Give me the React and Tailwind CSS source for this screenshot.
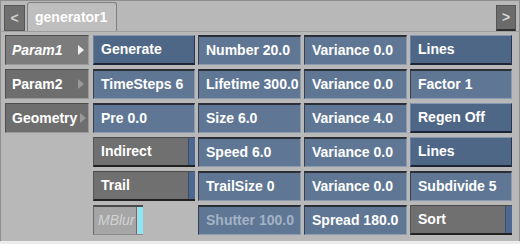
const font = { fontFamily: '"Liberation Sans", Arial, sans-serif' };

function Field({ label, dim }) {
  return (
    <div
      className={`h-[30px] flex items-center pl-[7px] bg-[#5f7794] border-t-2 border-l border-t-[#2c2f36] border-l-[#3a3f48] border-r border-b border-r-[#8d9bb0] border-b-[#8d9bb0] text-[14px] font-bold whitespace-nowrap overflow-hidden ${
        dim ? "text-[#a3b2c4]" : "text-white"
      }`}
    >
      {label}
    </div>
  );
}

function Raised({ label }) {
  return (
    <div className="h-[30px] flex items-center pl-[7px] bg-[#4f6787] border-t border-t-[#8597b0] border-l border-l-[#6d80a0] border-b-2 border-b-[#1c2538] border-r border-r-[#2b3650] text-[14px] font-bold text-white whitespace-nowrap">
      {label}
    </div>
  );
}

function Toggle({ label }) {
  return (
    <div className="h-[30px] flex bg-[#707070] border-t border-t-[#4a4a4a] border-l border-l-[#555] border-b-2 border-b-[#222] text-[14px] font-bold text-white">
      <div className="flex-1 flex items-center pl-[7px]">{label}</div>
      <div className="w-[7px] bg-[#4d6890] border-l border-l-[#3c4f6c]" />
    </div>
  );
}

function ParamBtn({ label, active }) {
  return (
    <div
      className={`h-[30px] flex items-center border-t border-l border-t-[#4e4e4e] border-l-[#4e4e4e] border-b border-r border-b-[#9a9a9a] border-r-[#9a9a9a] ${
        active ? "bg-[#7c7c7c]" : "bg-[#6e6e6e]"
      }`}
    >
      <div
        className={`flex-1 pl-[6px] text-[14px] font-bold text-white whitespace-nowrap ${active ? "italic" : ""}`}
      >
        {label}
      </div>
      <svg width="12" height="12" viewBox="0 0 12 12" className="mr-[1px] shrink-0">
        <polygon points="3,1 9,6 3,11" fill={active ? "#f2f2f2" : "#9a9a9a"} />
      </svg>
    </div>
  );
}

export default function App() {
  return (
    <div className="w-[520px] h-[244px] bg-[#ececec]" style={font}>
      <div className="h-[241px] bg-[#b8b8b8] border-t border-l border-r border-[#8e8e8e]">
        {/* tab bar */}
        <div className="h-[31px] flex items-end px-[3px] border-b border-b-[#9d9d9d]">
          <div className="w-[21px] h-[26px] bg-[#6f6f6f] border border-[#555] flex items-center justify-center text-[#d0d0d0] text-[14px] font-bold">
            &lt;
          </div>
          <div className="ml-[2px] w-[90px] h-[29px] bg-[#bebebe] border border-b-0 border-[#7f7f7f] rounded-t-[3px] flex items-center pl-[7px] text-white text-[14px] font-bold">
            generator1
          </div>
          <div className="flex-1" />
          <div className="w-[20px] h-[26px] bg-[#6b6b6b] border border-[#555] border-b-2 border-b-[#2e2e2e] flex items-center justify-center text-[#d6d6d6] text-[14px] font-bold">
            &gt;
          </div>
        </div>

        {/* grid */}
        <div className="grid grid-cols-[84px_103px_103px_103px_102px] gap-x-[3px] gap-y-[4px] pl-[4px] pt-[3px]">
          <ParamBtn label="Param1" active />
          <div className="ml-[1px]"><Raised label="Generate" /></div>
          <Field label="Number 20.0" />
          <Field label="Variance 0.0" />
          <Raised label="Lines" />

          <ParamBtn label="Param2" />
          <div className="ml-[1px]"><Field label="TimeSteps 6" /></div>
          <Field label="Lifetime 300.0" />
          <Field label="Variance 0.0" />
          <Field label="Factor 1" />

          <ParamBtn label="Geometry" />
          <div className="ml-[1px]"><Field label="Pre 0.0" /></div>
          <Field label="Size 6.0" />
          <Field label="Variance 4.0" />
          <Raised label="Regen Off" />

          <div />
          <div className="ml-[1px]"><Toggle label="Indirect" /></div>
          <Field label="Speed 6.0" />
          <Field label="Variance 0.0" />
          <Raised label="Lines" />

          <div />
          <div className="ml-[1px]"><Toggle label="Trail" /></div>
          <Field label="TrailSize 0" />
          <Field label="Variance 0.0" />
          <Field label="Subdivide 5" />

          <div />
          <div className="ml-[1px]">
            <div className="w-[50px] h-[30px] flex bg-[#a6a6a6] border-t-2 border-t-[#4a4a4a] border-l border-l-[#6a6a6a] border-b border-b-[#8a8a8a]">
              <div className="flex-1 flex items-center pl-[4px] text-[14px] italic text-[#d2d2d2] overflow-hidden whitespace-nowrap">
                MBlur
              </div>
              <div className="w-[7px] bg-[#8ee6f4] border-l border-l-[#9b5a4e]" />
            </div>
          </div>
          <Field label="Shutter 100.0" dim />
          <Field label="Spread 180.0" />
          <Toggle label="Sort" />
        </div>
      </div>
    </div>
  );
}
